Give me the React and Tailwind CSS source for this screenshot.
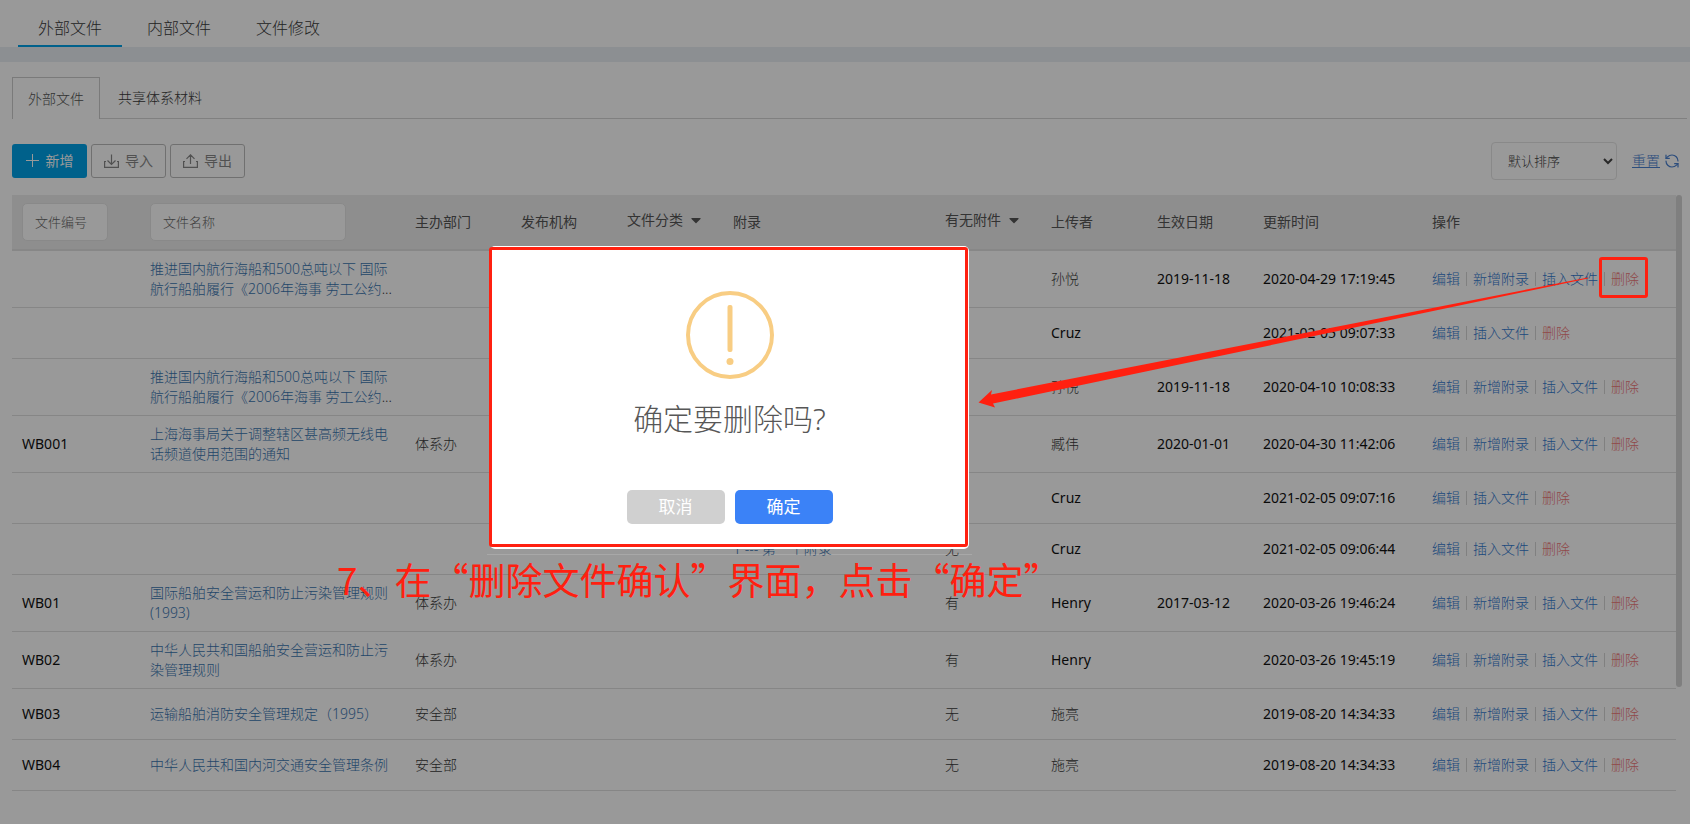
import React from 'react';
import { RefreshCcw } from 'lucide-react';
import { FaCaretDown } from 'react-icons/fa';

const longTitle = '推进国内航行海船和500总吨以下 国际航行船舶履行《2006年海事 劳工公约';

const rows = [
  { title: longTitle, clipped: true, user: '孙悦', date: '2019-11-18', updated: '2020-04-29 17:19:45', full: true },
  { user: 'Cruz', updated: '2021-02-05 09:07:33' },
  { title: longTitle, clipped: true, user: '孙悦', date: '2019-11-18', updated: '2020-04-10 10:08:33', full: true },
  { code: 'WB001', title: '上海海事局关于调整辖区甚高频无线电话频道使用范围的通知', dept: '体系办', user: '臧伟', date: '2020-01-01', updated: '2020-04-30 11:42:06', full: true },
  { user: 'Cruz', updated: '2021-02-05 09:07:16' },
  { appendix: '1 --- 第一个附录', attach: '无', user: 'Cruz', updated: '2021-02-05 09:06:44' },
  { code: 'WB01', title: '国际船舶安全营运和防止污染管理规则(1993)', dept: '体系办', attach: '有', user: 'Henry', date: '2017-03-12', updated: '2020-03-26 19:46:24', full: true },
  { code: 'WB02', title: '中华人民共和国船舶安全营运和防止污染管理规则', dept: '体系办', attach: '有', user: 'Henry', updated: '2020-03-26 19:45:19', full: true },
  { code: 'WB03', title: '运输船舶消防安全管理规定（1995）', dept: '安全部', attach: '无', user: '施亮', updated: '2019-08-20 14:34:33', full: true },
  { code: 'WB04', title: '中华人民共和国内河交通安全管理条例', dept: '安全部', attach: '无', user: '施亮', updated: '2019-08-20 14:34:33', full: true },
];

const App = () => {
  return (
    <div
      lang="zh-CN"
      className="relative min-h-screen overflow-hidden bg-white font-['Noto_Sans','Noto_Sans_CJK_SC',sans-serif] text-sm font-light text-[#3a3a3a]"
    >
      <MainNav />
      <div className="h-[15px] bg-[#e9eff4]" />
      <main className="pl-3 pt-[15px]">
        <SubTabs />
        <Toolbar />
        <div className="flex pr-2">
          <FileTable />
          <div className="h-[492px] w-[6px] shrink-0 rounded-full bg-[#d4d4d4]" />
        </div>
      </main>
      <div className="absolute inset-0 bg-black/40" />
      <ConfirmDialog />
      <Annotations />
    </div>
  );
};

const MainNav = () => (
  <nav className="flex h-[47px] gap-[5px] pl-[18px] text-base">
    <a href="#external" className="flex items-center border-b-2 border-[#00a2e8] px-5 pt-[10px]">外部文件</a>
    <a href="#internal" className="flex items-center border-b-2 border-transparent px-5 pt-[10px]">内部文件</a>
    <a href="#changes" className="flex items-center border-b-2 border-transparent px-5 pt-[10px]">文件修改</a>
  </nav>
);

const SubTabs = () => (
  <div className="mr-[3px] flex h-[42px] gap-[2px] border-b border-[#d5d5d5]">
    <a href="#list" className="-mb-px flex items-center border border-b-0 border-[#ccc] bg-white px-[15px] text-[#555]">外部文件</a>
    <a href="#shared" className="flex items-center px-4">共享体系材料</a>
  </div>
);

const Toolbar = () => (
  <div className="flex items-center pb-[15px] pr-[10px] pt-[23px]">
    <div className="flex items-center gap-1">
      <button className="flex h-[34px] w-[75px] items-center justify-center gap-[6px] rounded-[3px] bg-[#00a2e8] font-normal text-white">
        <svg className="h-[14px] w-[14px]" viewBox="0 0 14 14" fill="none" stroke="currentColor">
          <path d="M6.5 0V13M0 6.5H13" />
        </svg>
        新增
      </button>
      <button className="flex h-[34px] w-[75px] items-center justify-center gap-[6px] rounded-[3px] border border-[#bbb] font-normal text-[#888]">
        <svg className="h-[15px] w-[15px]" viewBox="0 0 15 15" fill="none" stroke="currentColor" strokeWidth="1.2">
          <path d="M2 7.5H0.6V13.4H14.4V7.5H13M7.5 0.5V10.5M3.5 6.5L7.5 10.5L11.5 6.5" />
        </svg>
        导入
      </button>
      <button className="flex h-[34px] w-[75px] items-center justify-center gap-[6px] rounded-[3px] border border-[#bbb] font-normal text-[#888]">
        <svg className="h-[15px] w-[15px]" viewBox="0 0 15 15" fill="none" stroke="currentColor" strokeWidth="1.2">
          <path d="M2 7.5H0.6V13.4H14.4V7.5H13M7.5 10V0.8M3.5 4.8L7.5 0.8L11.5 4.8" />
        </svg>
        导出
      </button>
    </div>
    <select aria-label="排序" className="ml-auto h-[38px] w-[126px] rounded-[4px] border border-[#e5e5e5] bg-white pl-3 text-[13px] text-[#444]">
      <option>默认排序</option>
    </select>
    <a href="#reset" className="ml-[15px] flex items-center gap-1 text-[#4a80d0]">
      <span className="underline">重置</span>
      <RefreshCcw className="h-4 w-4" strokeWidth={1.8} />
    </a>
  </div>
);

const FileTable = () => (
  <table className="min-w-0 flex-1 table-fixed border-separate border-spacing-0 text-left">
    <colgroup>
      <col className="w-[128px]" />
      <col className="w-[265px]" />
      <col className="w-[106px]" />
      <col className="w-[106px]" />
      <col className="w-[106px]" />
      <col className="w-[212px]" />
      <col className="w-[106px]" />
      <col className="w-[106px]" />
      <col className="w-[106px]" />
      <col className="w-[169px]" />
      <col className="w-[254px]" />
    </colgroup>
    <thead>
      <tr className="h-14 bg-[#ededed] [&>th]:border-b-2 [&>th]:border-[#e2e2e2]">
        <th className="px-[10px]">
          <input aria-label="文件编号" placeholder="文件编号" className="block h-[38px] w-[86px] rounded-[5px] border border-[#e5e5e5] bg-white px-3 text-[13px] font-light placeholder:text-[#666]" />
        </th>
        <th className="px-[10px]">
          <input aria-label="文件名称" placeholder="文件名称" className="block h-[38px] w-[196px] rounded-[5px] border border-[#e5e5e5] bg-white px-3 text-[13px] font-light placeholder:text-[#666]" />
        </th>
        <HeadCell text="主办部门" />
        <HeadCell text="发布机构" />
        <HeadCell text="文件分类" sortable />
        <HeadCell text="附录" />
        <HeadCell text="有无附件" sortable />
        <HeadCell text="上传者" />
        <HeadCell text="生效日期" />
        <HeadCell text="更新时间" />
        <HeadCell text="操作" />
      </tr>
    </thead>
    <tbody>
      {rows.map((row, i) => (
        <tr key={i} className="h-[51px] [&>td]:border-b [&>td]:border-[#e0e0e0]">
          <td className="px-[10px] font-normal text-[#111]">{row.code}</td>
          <td className="px-[10px] py-2">
            {row.title && <a href="#file" className="text-[#3a75b0]">{row.title}</a>}
            {row.clipped && <span>...</span>}
          </td>
          <td className="px-[10px]">{row.dept}</td>
          <td />
          <td />
          <td className="px-[10px]">
            {row.appendix && <a href="#appendix" className="text-[#3a75b0]">{row.appendix}</a>}
          </td>
          <td className="px-[10px]">{row.attach}</td>
          <td className="px-[10px]">
            {/^[A-Z]/.test(row.user) ? <span className="font-normal text-[#111]">{row.user}</span> : row.user}
          </td>
          <td className="px-[10px] font-normal text-[#111]">{row.date}</td>
          <td className="whitespace-nowrap px-[10px] font-normal text-[#111]">{row.updated}</td>
          <td className="px-[10px]">
            <div className="flex whitespace-nowrap leading-[14px]">
              <ActionLink text="编辑" />
              {row.full && <ActionLink text="新增附录" />}
              <ActionLink text="插入文件" />
              <a href="#delete" className="text-[#f07a7a]">删除</a>
            </div>
          </td>
        </tr>
      ))}
    </tbody>
  </table>
);

const HeadCell = ({ text, sortable }) => (
  <th className="whitespace-nowrap px-[10px] font-normal text-[#555]">
    {sortable ? (
      <button className="flex items-center gap-[6px] pb-1">
        {text}
        <FaCaretDown className="h-4 w-[14px]" />
      </button>
    ) : (
      text
    )}
  </th>
);

const ActionLink = ({ text }) => (
  <a href="#action" className="mr-[6px] border-r border-[#d5d5d5] pr-[6px] text-[#337ad0]">
    {text}
  </a>
);

const ConfirmDialog = () => (
  <div
    role="dialog"
    aria-label="删除文件确认"
    className="absolute left-[490px] top-[246px] flex h-[303px] w-[479px] flex-col items-center rounded-[5px] bg-white pt-[45px]"
  >
    <svg className="h-[88px] w-[88px]" viewBox="0 0 88 88" fill="none">
      <circle cx="44" cy="44" r="42" stroke="#f8cd83" strokeWidth="4" />
      <rect x="41.5" y="14" width="5" height="47" rx="2" fill="#f8cd83" />
      <circle cx="44" cy="70.5" r="3.5" fill="#f8cd83" />
    </svg>
    <h2 className="mt-5 text-3xl leading-10 text-[#575757]">确定要删除吗?</h2>
    <div className="mt-[51px] flex gap-[10px] text-[17px] font-normal text-white">
      <button className="h-[34px] w-[98px] rounded-[5px] bg-[#d0d0d0]">取消</button>
      <button className="h-[34px] w-[98px] rounded-[5px] bg-[#3b82f7]">确定</button>
    </div>
  </div>
);

// red marks drawn over the page: boxes, arrow and step caption
const Annotations = () => (
  <div className="pointer-events-none absolute inset-0">
    <div className="absolute left-[487px] top-[554px] h-px w-[485px] bg-white/15" />
    <div className="absolute left-[489px] top-[247px] h-[300px] w-[479px] rounded-[3px] border-[3px] border-[#ff2010]" />
    <div className="absolute left-[1599px] top-[257px] h-[41px] w-[49px] rounded-[3px] border-[3px] border-[#ff2010]" />
    <svg className="absolute left-[970px] top-[270px] h-[150px] w-[630px]" viewBox="970 270 630 150" fill="#ff2010">
      <path d="M1588 277.5L991 394.5L992 390L978.5 402.5L995 407.5L993 403.5L1588 278.5Z" />
    </svg>
    <p className="absolute left-[337px] top-[557px] whitespace-nowrap font-['Noto_Sans_CJK_SC',sans-serif] text-[37px] font-normal leading-[44px] text-[#ff2010]">
      7、在“删除文件确认”界面，点击“确定”
    </p>
  </div>
);

export default App;
